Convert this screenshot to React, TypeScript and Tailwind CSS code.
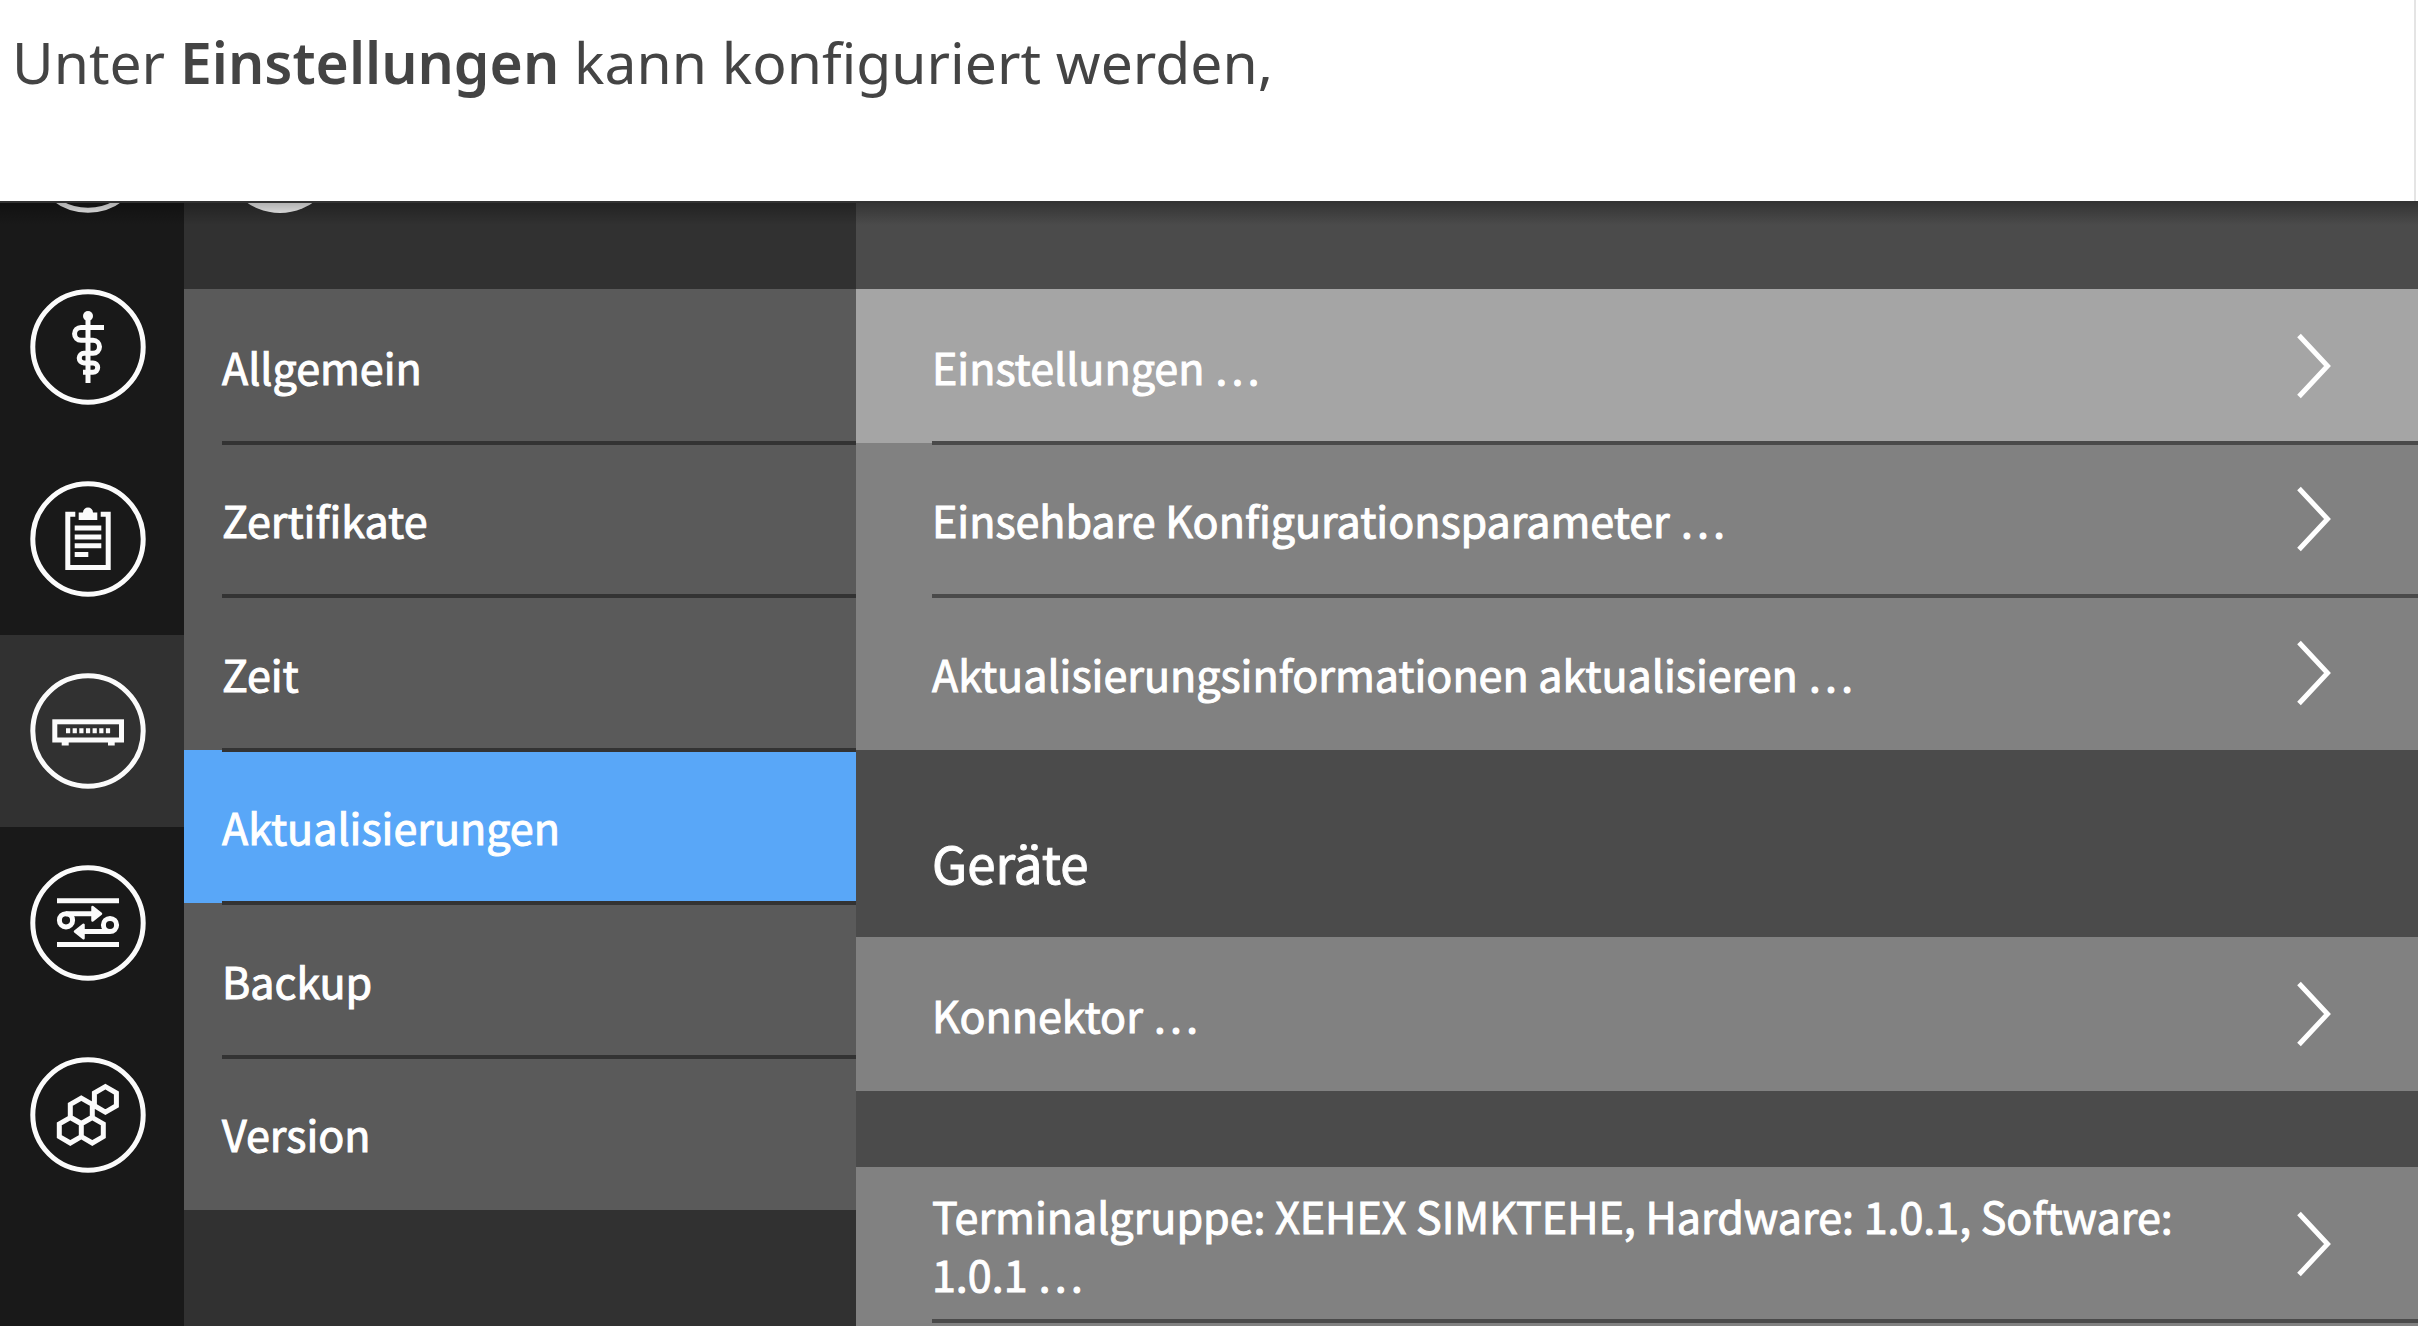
import type { ReactNode } from "react";

const hex = (cx: number, cy: number) =>
  `M${cx} ${cy - 12.7}l11 6.35v12.7l-11 6.35l-11 -6.35v-12.7z`;

function CircleIcon({ children }: { children?: ReactNode }) {
  return (
    <svg
      viewBox="0 0 116 116"
      className="size-[116px] shrink-0"
      fill="none"
      stroke="#fbfbfb"
      strokeWidth="5"
      aria-hidden="true"
    >
      <circle cx="58" cy="58" r="55.2" />
      {children}
    </svg>
  );
}

const icons = {
  staff: (
    <>
      <circle cx="58" cy="27" r="5" fill="#fbfbfb" stroke="none" />
      <path d="M58 27V94" />
      <path d="M74 38.4H51a6.4 6.4 0 0 0 0 12.9H63a6.5 6.5 0 0 1 0 13H54a4.8 4.8 0 0 0 0 9.6H63a4.7 4.7 0 0 1 0 9.4H53" />
    </>
  ),
  clipboard: (
    <>
      <path d="M45.3 33.2H37.8V86.5H78.2V33.2H70.7" />
      <path d="M48.7 31.5H53a5 5 0 0 1 10 0H67.3V39H48.7z" fill="#fbfbfb" stroke="none" />
      <path d="M44.7 47H71.3M44.7 56H71.3M44.7 64.7H71.3M44.7 73.4H58.3" />
    </>
  ),
  router: (
    <>
      <rect x="24.8" y="48.8" width="66.7" height="18.2" />
      <path d="M31.7 70.7H38.7M78 70.7H84.7" strokeWidth="3.5" />
      <path d="M36 57.8H81" strokeDasharray="4.2 2.45" />
    </>
  ),
  exchange: (
    <>
      <path d="M27 35.8H89M27 79.6H89" />
      <circle cx="36" cy="55.3" r="6.6" />
      <circle cx="80" cy="60" r="6.6" />
      <path d="M36 48.7H64M80 66.5H52" />
      <path
        d="M62.5 42V55.4L71 48.7zM53.5 59.8V73.2L45 66.5z"
        fill="#fbfbfb"
        strokeWidth="2.5"
        strokeLinejoin="round"
      />
    </>
  ),
  hexagons: (
    <path d={hex(75.4, 42.4) + hex(51.3, 53.8) + hex(40.3, 73.3) + hex(62.3, 73.3)} />
  ),
};

const modules: { label: string; icon: ReactNode; active?: boolean }[] = [
  { label: "Praxis", icon: icons.staff },
  { label: "Protokoll", icon: icons.clipboard },
  { label: "System", icon: icons.router, active: true },
  { label: "Netzwerk", icon: icons.exchange },
  { label: "Module", icon: icons.hexagons },
];

const sections = ["Allgemein", "Zertifikate", "Zeit", "Aktualisierungen", "Backup", "Version"];

function Chevron() {
  return (
    <svg
      viewBox="0 0 36 68"
      className="h-[68px] w-9 shrink-0"
      fill="none"
      stroke="#ffffff"
      strokeWidth="5"
      aria-hidden="true"
    >
      <path d="M3 3.5L31.5 34L3 64.5" />
    </svg>
  );
}

function Row({ label, active, divider }: { label: string; active?: boolean; divider?: boolean }) {
  return (
    <button
      type="button"
      className={`relative flex h-full min-h-[153px] w-full items-center justify-between pl-[76px] pr-[86px] text-left ${
        active ? "bg-[#a5a5a5]" : "bg-[#818181]"
      }`}
    >
      <span className="max-w-[1260px]">{label}</span>
      <Chevron />
      {divider && <span className="absolute -bottom-0.5 left-[76px] right-0 z-10 h-1 bg-[#4a4a4a]" />}
    </button>
  );
}

export default function App() {
  return (
    <div className="flex h-screen flex-col overflow-hidden bg-white">
      <header className="mr-0.5 h-[201px] shrink-0 border-r-2 border-[#e4e4e4] px-3 pt-[22px]">
        <p className="font-['Noto_Sans'] text-[57px] leading-20 text-[#444444]">
          Unter <strong className="font-semibold">Einstellungen</strong> kann konfiguriert werden,
        </p>
      </header>

      <div className="relative flex min-h-0 flex-1 overflow-hidden bg-[#4b4b4b] font-['Noto_Sans_CJK_JP','Noto_Sans',sans-serif] text-[43px] leading-[58px] text-white [-webkit-text-stroke:1px_white]">
        <div className="pointer-events-none absolute inset-x-0 top-0 z-20 h-6 border-t-2 border-[#333333] bg-linear-to-b from-black/30 to-transparent" />

        <nav aria-label="Module" className="flex w-[184px] shrink-0 flex-col bg-[#191919]">
          <button
            type="button"
            aria-label="Start"
            className="flex h-[50px] shrink-0 items-end pb-[38px] pl-[30px]"
          >
            <CircleIcon />
          </button>
          {modules.map((m) => (
            <button
              key={m.label}
              type="button"
              aria-label={m.label}
              className={`flex h-48 shrink-0 items-center pl-[30px] ${m.active ? "bg-[#313131]" : ""}`}
            >
              <CircleIcon>{m.icon}</CircleIcon>
            </button>
          ))}
        </nav>

        <aside className="w-[672px] shrink-0 bg-[#313131]">
          <div className="flex h-[88px] items-end pb-[76px] pl-[38px]">
            <span className="size-[116px] shrink-0 rounded-full bg-white" />
          </div>
          <ul className="grid h-[921px] grid-rows-6">
            {sections.map((s, i) => (
              <li key={s} className="relative">
                <button
                  type="button"
                  className={`flex h-full w-full items-center px-[38px] text-left ${
                    s === "Aktualisierungen" ? "bg-[#59a7f8]" : "bg-[#5a5a5a]"
                  }`}
                >
                  {s}
                </button>
                {i < sections.length - 1 && (
                  <span className="absolute -bottom-0.5 left-[38px] right-0 z-10 h-1 bg-[#333333]" />
                )}
              </li>
            ))}
          </ul>
        </aside>

        <main className="min-w-0 flex-1 pt-[88px]">
          <div className="grid h-[461px] grid-rows-3">
            <Row label="Einstellungen …" active divider />
            <Row label="Einsehbare Konfigurationsparameter …" divider />
            <Row label="Aktualisierungsinformationen aktualisieren …" />
          </div>
          <h2 className="flex h-[187px] items-center pl-[76px] pt-9 text-[51px]">Geräte</h2>
          <div className="h-[154px]">
            <Row label="Konnektor …" />
          </div>
          <div className="mt-[76px] h-[154px]">
            <Row
              label="Terminalgruppe: XEHEX SIMKTEHE, Hardware: 1.0.1, Software: 1.0.1 …"
              divider
            />
          </div>
          <div className="h-[154px] bg-[#818181]" />
        </main>
      </div>
    </div>
  );
}
